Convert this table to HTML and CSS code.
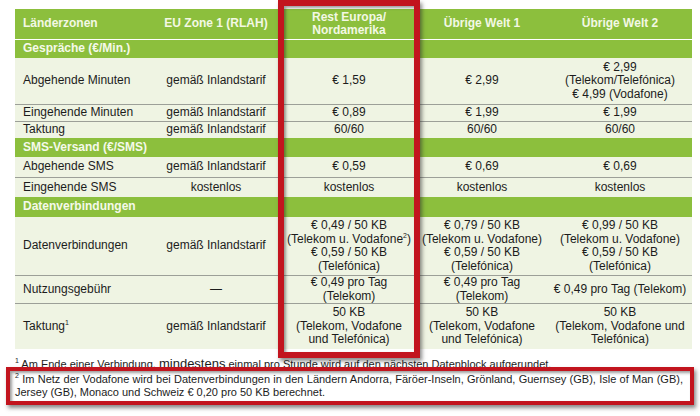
FILE: index.html
```html
<!DOCTYPE html>
<html lang="de">
<head>
<meta charset="utf-8">
<title>Roaming Tarife</title>
<link rel="stylesheet" href="styles.css">
</head>
<body>
<div class="page">
  <div class="table">
    <div class="row head">
      <div class="c c1">Länderzonen</div>
      <div class="c c2">EU Zone 1 (RLAH)</div>
      <div class="c c3">Rest Europa/<br>Nordamerika</div>
      <div class="c c4">Übrige Welt 1</div>
      <div class="c c5">Übrige Welt 2</div>
    </div>
    <div class="row sec h18"><div class="c">Gespräche (€/Min.)</div></div>
    <div class="row body h46">
      <div class="c c1">Abgehende Minuten</div>
      <div class="c c2">gemäß Inlandstarif</div>
      <div class="c c3">€ 1,59</div>
      <div class="c c4">€ 2,99</div>
      <div class="c c5">€ 2,99<br>(Telekom/Telefónica)<br>€ 4,99 (Vodafone)</div>
    </div>
    <div class="row body h17">
      <div class="c c1">Eingehende Minuten</div>
      <div class="c c2">gemäß Inlandstarif</div>
      <div class="c c3">€ 0,89</div>
      <div class="c c4">€ 1,99</div>
      <div class="c c5">€ 1,99</div>
    </div>
    <div class="row body h17">
      <div class="c c1">Taktung</div>
      <div class="c c2">gemäß Inlandstarif</div>
      <div class="c c3">60/60</div>
      <div class="c c4">60/60</div>
      <div class="c c5">60/60</div>
    </div>
    <div class="row sec h19"><div class="c">SMS-Versand (€/SMS)</div></div>
    <div class="row body h20">
      <div class="c c1">Abgehende SMS</div>
      <div class="c c2">gemäß Inlandstarif</div>
      <div class="c c3">€ 0,59</div>
      <div class="c c4">€ 0,69</div>
      <div class="c c5">€ 0,69</div>
    </div>
    <div class="row body h20">
      <div class="c c1">Eingehende SMS</div>
      <div class="c c2">kostenlos</div>
      <div class="c c3">kostenlos</div>
      <div class="c c4">kostenlos</div>
      <div class="c c5">kostenlos</div>
    </div>
    <div class="row sec h20"><div class="c">Datenverbindungen</div></div>
    <div class="row body h58">
      <div class="c c1">Datenverbindungen</div>
      <div class="c c2">gemäß Inlandstarif</div>
      <div class="c c3">€ 0,49 / 50 KB<br>(Telekom u. Vodafone<sup>2</sup>)<br>€ 0,59 / 50 KB<br>(Telefónica)</div>
      <div class="c c4">€ 0,79 / 50 KB<br>(Telekom u. Vodafone)<br>€ 0,59 / 50 KB<br>(Telefónica)</div>
      <div class="c c5">€ 0,99 / 50 KB<br>(Telekom u. Vodafone)<br>€ 0,59 / 50 KB<br>(Telefónica)</div>
    </div>
    <div class="row body h28">
      <div class="c c1">Nutzungsgebühr</div>
      <div class="c c2">—</div>
      <div class="c c3">€ 0,49 pro Tag<br>(Telekom)</div>
      <div class="c c4">€ 0,49 pro Tag<br>(Telekom)</div>
      <div class="c c5">€ 0,49 pro Tag (Telekom)</div>
    </div>
    <div class="row body h46">
      <div class="c c1">Taktung<sup>1</sup></div>
      <div class="c c2">gemäß Inlandstarif</div>
      <div class="c c3">50 KB<br>(Telekom, Vodafone<br>und Telefónica)</div>
      <div class="c c4">50 KB<br>(Telekom, Vodafone<br>und Telefónica)</div>
      <div class="c c5">50 KB<br>(Telekom, Vodafone und<br>Telefónica)</div>
    </div>
  </div>
  <p class="note note1"><sup>1</sup> Am Ende einer Verbindung, <span class="big">mindestens</span> einmal pro Stunde wird auf den nächsten Datenblock aufgerundet.</p>
  <p class="note note2"><sup>2</sup> Im Netz der Vodafone wird bei Datenverbindungen in den Ländern Andorra, Färöer-Inseln, Grönland, Guernsey (GB), Isle of Man (GB), Jersey (GB), Monaco und Schweiz € 0,20 pro 50 KB berechnet.</p>
  <div class="mark mark-col"></div>
  <div class="mark mark-note"></div>
</div>
</body>
</html>
```

FILE: styles.css
```css
* { box-sizing: border-box; }
html, body { margin: 0; padding: 0; background: #ffffff; }
body {
  font-family: "Liberation Sans", Arial, sans-serif;
  color: #1c1c1c;
  font-size: 12px;
}
.page {
  position: relative;
  width: 700px;
  height: 416px;
  padding: 9px 8px 0 15px;
  overflow: hidden;
}
.table {
  width: 677px;
  display: flex;
  flex-direction: column;
}
.row {
  display: flex;
  align-items: center;
  line-height: 13.5px;
}
.c { flex: none; }
.c1 { width: 135px; padding-left: 8px; }
.c2 { width: 132px; text-align: center; }
.c3 { width: 134px; text-align: center; }
.c4 { width: 132px; text-align: center; }
.c5 { width: 144px; text-align: center; }

.head {
  height: 31px;
  background: #8cbf3d;
  color: #f3f8e4;
  font-weight: bold;
  border-bottom: 1px solid #ffffff;
}
.head .c1 { text-align: left; }
.sec {
  background: #8cbf3d;
  color: #f5f9ea;
  font-weight: bold;
}
.sec .c { padding-left: 8px; }
.body {
  background: #eff4e3;
  border-top: 1px solid #9c9f98;
}
.sec + .body { border-top: none; }

.h17 { height: 17px; }
.h18 { height: 18px; }
.h19 { height: 19px; }
.h20 { height: 20px; }
.h28 { height: 28px; }
.h46 { height: 46px; }
.h58 { height: 58px; }

sup {
  font-size: 7px;
  line-height: 0;
  vertical-align: 5px;
}

.note {
  margin: 0;
  font-size: 11px;
  color: #1c1c1c;
}
.note1 {
  line-height: 13px;
  margin-top: 8px;
}
.note1 .big { font-size: 13px; line-height: 13px; }
.note2 {
  width: 668px;
  line-height: 13px;
  margin-top: 2px;
  text-align: justify;
}

.mark {
  position: absolute;
  border-style: solid;
  border-color: #c2141e;
  box-shadow: 2px 3px 4px rgba(40, 40, 40, 0.55), inset 2px 2px 3px rgba(40, 40, 40, 0.45);
}
.mark-col {
  left: 278px;
  top: 0;
  width: 142px;
  height: 358px;
  border-width: 6px;
}
.mark-note {
  left: 6px;
  top: 367px;
  width: 688px;
  height: 38px;
  border-width: 4px;
}
```
